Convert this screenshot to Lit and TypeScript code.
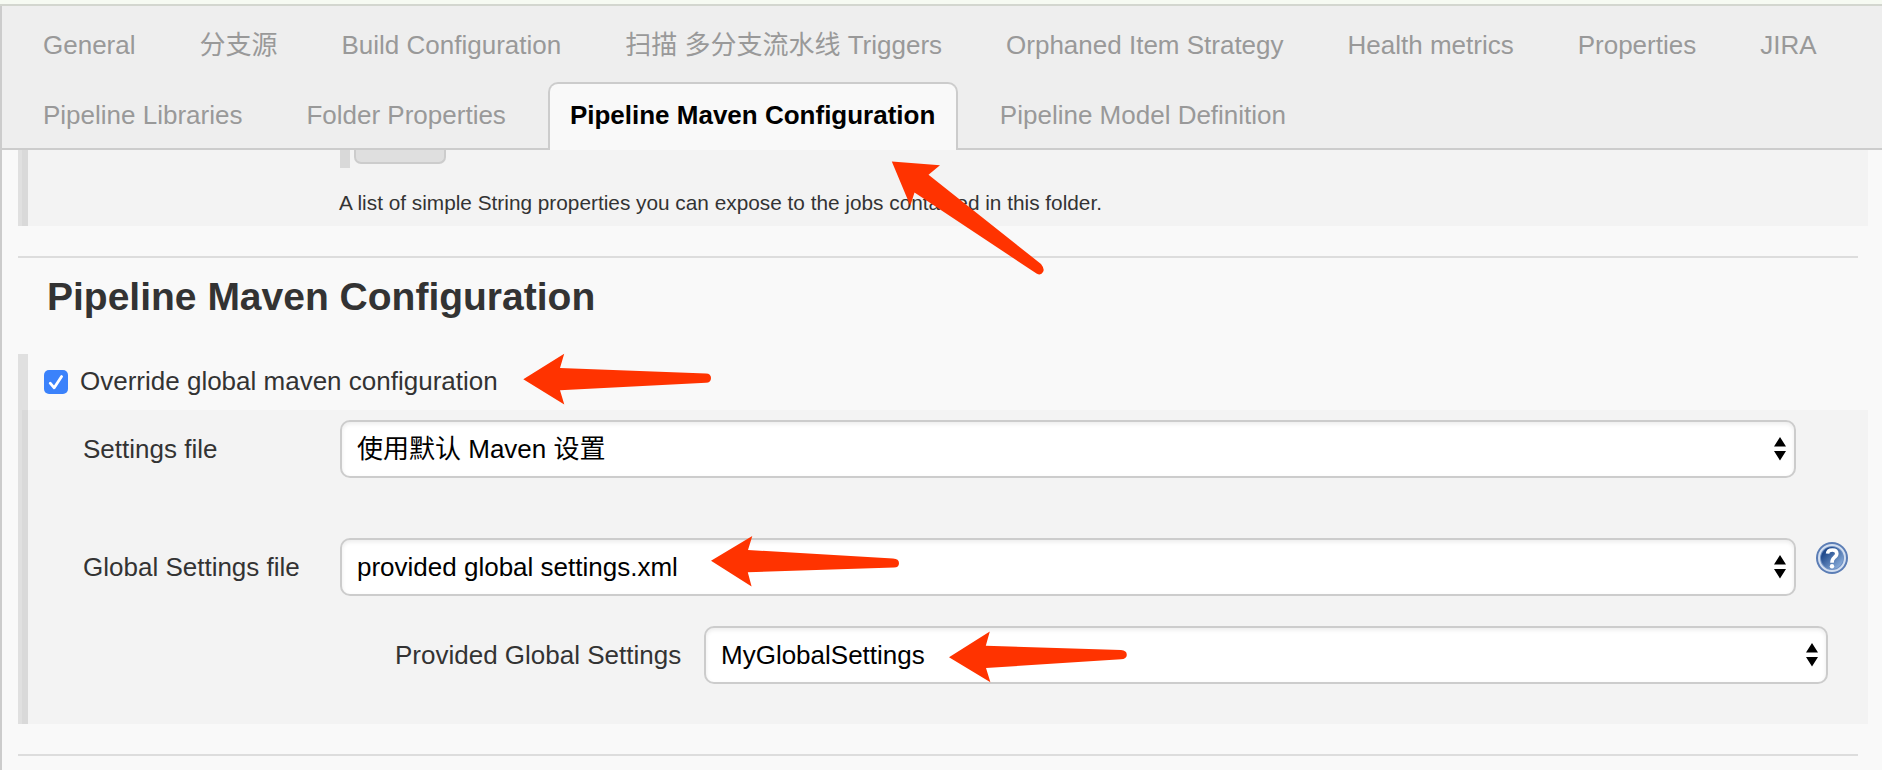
import { LitElement, html, css, svg } from "lit";
import { customElement, property } from "lit/decorators.js";

@customElement("select-box")
class SelectBox extends LitElement {
  @property() value = "";
  static styles = css`
    :host { display: block; }
    .box {
      box-sizing: border-box; height: 58px; display: flex; align-items: center;
      justify-content: space-between; padding: 0 8px 0 15px; background: #fff;
      border: 2px solid #ccc; border-radius: 10px; color: #000;
      box-shadow: inset 0 2px 4px rgba(0, 0, 0, 0.08);
    }
    svg { display: block; }
  `;
  render() {
    return html`<div class="box"><span>${this.value}</span>
      <svg width="12" height="24" viewBox="0 0 12 24"><path d="M6 0l6 9.6H0zM0 14h12L6 23.6z" /></svg>
    </div>`;
  }
}

@customElement("help-icon")
class HelpIcon extends LitElement {
  static styles = css`:host, svg { display: block; }`;
  render() {
    return html`<svg width="32" height="32" viewBox="0 0 32 32">
      <defs><linearGradient id="g" x1="0.1" y1="0.1" x2="0.9" y2="0.9">
        <stop offset="0.15" stop-color="#204a8c" /><stop offset="1" stop-color="#8db0dc" />
      </linearGradient></defs>
      <circle cx="16" cy="16" r="16" fill="#5b7db5" />
      <circle cx="16" cy="16" r="13" fill="#6f90c4" stroke="#d3dff0" stroke-width="2" />
      <circle cx="16" cy="16" r="11" fill="url(#g)" />
      <path d="M11.6 11.6Q11.8 8 16.4 8Q20.8 8 20.8 11.6Q20.8 13.8 18.2 15.6Q16 17.2 16 20.8" fill="none" stroke="#fff" stroke-width="3.6" />
      <circle cx="16" cy="24.2" r="2.2" fill="#fff" />
    </svg>`;
  }
}

const TABS = [
  ["General", "分支源", "Build Configuration", "扫描 多分支流水线 Triggers", "Orphaned Item Strategy", "Health metrics", "Properties", "JIRA"],
  ["Pipeline Libraries", "Folder Properties", "Pipeline Maven Configuration", "Pipeline Model Definition"],
];
const ACTIVE = "Pipeline Maven Configuration";

const ARROWS = [
  "M891.8 161.5L940 165.3L928.5 174.8L1041 264Q1045 269 1043 272Q1041 276 1036.5 273.5L914.5 192.5L910.3 205.7Z",
  "M523.3 379.3L564.2 353.8L560 368L706 373.4Q711 373.6 711 378Q711 382.6 706 382.8L560 390.3L564.3 404.5Z",
  "M711 560.7L752.3 536L748 550L893 558.6Q899 559 899 563.2Q899 567.4 894 567.6L747.8 572.2L751.6 586.5Z",
  "M949 657.3L989.8 631.6L985.8 645.7L1121 650.1Q1126.8 650.4 1126.8 655Q1126.6 659 1121 659.3L986 668L990.4 682.2Z",
];

@customElement("app-root")
class AppRoot extends LitElement {
  static styles = css`
    :host {
      display: block; position: relative; width: 1882px; height: 770px; overflow: hidden;
      background: #f9f9f9; color: #333;
      font: 26px/30px "Liberation Sans", Arial, "Noto Sans CJK SC", sans-serif;
    }
    .strip { height: 4px; background: #f6faf2; border-bottom: 2px solid #d3d6cf; }
    .page { box-sizing: border-box; height: 764px; border-left: 2px solid #ccc; }
    .tabs {
      box-sizing: border-box; height: 144px; padding: 6px 0 0 20px; background: #eee;
      border-bottom: 2px solid #ccc; display: flex; flex-direction: column; gap: 2px;
    }
    .row { display: flex; gap: 22px; }
    .tab {
      box-sizing: border-box; height: 68px; padding: 16px 19px 0; border: 2px solid transparent;
      border-bottom: 0; border-radius: 10px 10px 0 0; color: #999; white-space: nowrap;
    }
    .tab.active { background: #f9f9f9; border-color: #ccc; color: #000; font-weight: bold; padding: 16px 21px 0 20px; margin: 0 -1.5px 0 -1px; }
    .content { padding: 0 14px 0 16px; }
    .block { background: #f3f3f3; border-left: 4px solid #e0e0e0; }
    .inner { box-sizing: border-box; border-left: 6px solid #d9d9d9; }
    .expose { height: 76px; padding-left: 312px; }
    .stub { display: flex; gap: 4px; height: 18px; }
    .bar { width: 10px; background: #d9d9d9; }
    .button {
      box-sizing: border-box; width: 92px; height: 14px; background: #dfdfdf;
      border: 2px solid #ccc; border-top: 0; border-radius: 0 0 7px 7px;
    }
    .note { font-size: 20.8px; line-height: 24px; padding-top: 23px; margin-left: -1px; white-space: nowrap; }
    .rule { height: 2px; background: #ddd; margin: 30px 10px 0 0; }
    h1 { margin: 0; padding: 17px 0 35px 29px; font-size: 39px; line-height: 44px; font-weight: bold; }
    .toggle {
      box-sizing: border-box; height: 56px; border-left: 10px solid #e0e0e0;
      display: flex; align-items: center; gap: 12px; padding: 0 0 0 16px;
    }
    .toggle span { padding-bottom: 3px; }
    .check { display: block; }
    .form { height: 314px; padding: 10px 0 0 55px; }
    .field { display: grid; grid-template-columns: 257px 1456px 52px; }
    .field help-icon { margin: 4px 0 0 20px; }
    .label { padding-top: 14px; white-space: nowrap; }
    .second { margin-top: 60px; }
    .nested { display: grid; grid-template-columns: 309px 1124px; margin: 30px 0 0 312px; }
    .arrows { position: absolute; left: 0; top: 0; pointer-events: none; }
  `;

  render() {
    return html`
      <div class="strip"></div>
      <div class="page">
        <nav class="tabs">
          ${TABS.map((row) => html`<div class="row">
            ${row.map((t) => html`<div class="tab ${t === ACTIVE ? "active" : ""}">${t}</div>`)}
          </div>`)}
        </nav>
        <main class="content">
          <section class="block"><div class="inner expose">
            <div class="stub"><div class="bar"></div><div class="button"></div></div>
            <div class="note">A list of simple String properties you can expose to the jobs contained in this folder.</div>
          </div></section>
          <div class="rule"></div>
          <h1>Pipeline Maven Configuration</h1>
          <div class="toggle">
            <svg class="check" width="24" height="24" viewBox="0 0 24 24">
              <rect width="24" height="24" rx="5" fill="#3b82fb" />
              <path d="M6.2 13.2L10.2 17.8L17.6 6.6" fill="none" stroke="#fff" stroke-width="2.8" stroke-linecap="round" stroke-linejoin="round" />
            </svg>
            <span>Override global maven configuration</span>
          </div>
          <section class="block"><div class="inner form">
            <div class="field">
              <div class="label">Settings file</div>
              <select-box value="使用默认 Maven 设置"></select-box>
            </div>
            <div class="field second">
              <div class="label">Global Settings file</div>
              <select-box value="provided global settings.xml"></select-box>
              <help-icon></help-icon>
            </div>
            <div class="nested">
              <div class="label">Provided Global Settings</div>
              <select-box value="MyGlobalSettings"></select-box>
            </div>
          </div></section>
          <div class="rule"></div>
        </main>
      </div>
      <svg class="arrows" width="1882" height="770" viewBox="0 0 1882 770">
        ${ARROWS.map((d) => svg`<path d=${d} fill="#ff3300" />`)}
      </svg>
    `;
  }
}
